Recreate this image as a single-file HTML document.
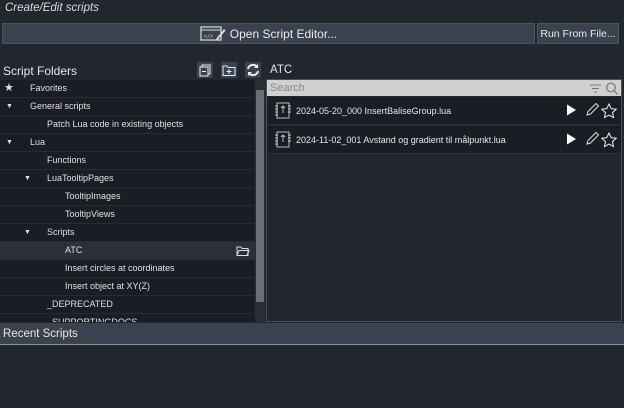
<!DOCTYPE html>
<html><head><style>
*{margin:0;padding:0;box-sizing:border-box}
body{width:624px;height:408px;background:#22262d;font-family:"Liberation Sans",sans-serif;color:#e6e6e6;position:relative;overflow:hidden}
.a{position:absolute}
.btn{background:#3a4250;border:1px solid #4a5361;color:#e8e8e8;font-size:12px;display:flex;align-items:center;justify-content:center;white-space:nowrap}
.tree{left:0;top:80px;width:255px;height:242px;background:#1a1d23;overflow:hidden}
.row{height:18px;border-bottom:1px solid #272b32;font-size:9px;line-height:17px;position:relative;color:#e0e0e0}
.ib{width:16px;height:16px;background:#3a4250;border-radius:1px}
.item{left:268px;width:353px;height:28px;background:#1a1d23;border-bottom:1px solid #2a2e35;font-size:9px;line-height:28px;padding-left:28px}
</style></head><body>
<div class="a" style="left:5px;top:2px;font-size:11.5px;font-style:italic;color:#dcdcdc">Create/Edit scripts</div>
<div class="a btn" style="left:2px;top:23px;width:533px;height:21px">
<svg width="26" height="15" viewBox="0 0 26 15" style="margin-right:4px"><rect x="1" y="1" width="20" height="13" fill="none" stroke="#ddd" stroke-width="1.2"/><line x1="1" y1="4" x2="21" y2="4" stroke="#ddd"/><text x="4" y="12" font-size="5" fill="#ddd" font-family="Liberation Mono">&lt;/&gt;</text><path d="M16 13 L24 3 L25.5 4.5 L17.5 14 Z" fill="#ddd"/></svg>Open Script Editor...</div>
<div class="a btn" style="left:537px;top:23px;width:82px;height:21px;font-size:10.5px">Run From File...</div>
<div class="a" style="left:3px;top:64px;font-size:12px;color:#e6e6e6">Script Folders</div>
<div class="a ib" style="left:197px;top:62px"><svg width="16" height="16"><rect x="5" y="3" width="8" height="9" fill="none" stroke="#eee"/><rect x="3" y="5" width="8" height="9" fill="#3a4250" stroke="#eee"/><line x1="5" y1="9.5" x2="9" y2="9.5" stroke="#eee"/></svg></div>
<div class="a ib" style="left:221px;top:62px"><svg width="16" height="16"><path d="M2 4h4l1 1.5h7v8H2z" fill="none" stroke="#eee"/><path d="M8 7v5M5.5 9.5h5" stroke="#eee"/></svg></div>
<div class="a ib" style="left:245px;top:62px"><svg width="16" height="16"><path d="M3 7a5 5 0 0 1 9-2M13 9a5 5 0 0 1-9 2" fill="none" stroke="#eee" stroke-width="2"/><path d="M13 2v4h-4zM3 14v-4h4z" fill="#eee"/></svg></div>
<div class="a" style="left:270px;top:64px;font-size:11.5px">ATC</div>
<div class="a tree">
<div class="row"><span class="a" style="left:4px;font-size:11px">★</span><span class="a" style="left:30px">Favorites</span></div>
<div class="row"><span class="a" style="left:6px;font-size:7px">▼</span><span class="a" style="left:30px">General scripts</span></div>
<div class="row"><span class="a" style="left:47px">Patch Lua code in existing objects</span></div>
<div class="row"><span class="a" style="left:6px;font-size:7px">▼</span><span class="a" style="left:30px">Lua</span></div>
<div class="row"><span class="a" style="left:47px">Functions</span></div>
<div class="row"><span class="a" style="left:24px;font-size:7px">▼</span><span class="a" style="left:47px">LuaTooltipPages</span></div>
<div class="row"><span class="a" style="left:65px">TooltipImages</span></div>
<div class="row"><span class="a" style="left:65px">TooltipViews</span></div>
<div class="row"><span class="a" style="left:24px;font-size:7px">▼</span><span class="a" style="left:47px">Scripts</span></div>
<div class="row" style="background:#2c3038"><span class="a" style="left:65px">ATC</span><svg class="a" style="left:236px;top:3px" width="14" height="12"><path d="M1 2h4l1 1.5h6v7H1z" fill="none" stroke="#ddd"/><path d="M1 10.5l2-5h10l-2 5" fill="none" stroke="#ddd"/></svg></div>
<div class="row"><span class="a" style="left:65px">Insert circles at coordinates</span></div>
<div class="row"><span class="a" style="left:65px">Insert object at XY(Z)</span></div>
<div class="row"><span class="a" style="left:47px">_DEPRECATED</span></div>
<div class="row"><span class="a" style="left:47px">_SUPPORTINGDOCS</span></div>
</div>
<div class="a" style="left:255px;top:79px;width:10px;height:243px;background:#2a2e35"></div>
<div class="a" style="left:256px;top:90px;width:8px;height:212px;background:#6b6e73"></div>
<div class="a" style="left:266px;top:79px;width:356px;height:243px;border:1px solid #4a4f57;background:#22262d"></div>
<div class="a" style="left:267px;top:80px;width:354px;height:16px;background:#d0d0d0;color:#888;font-size:11px;line-height:16px;padding-left:3px">Search
<svg class="a" style="left:322px;top:2px" width="30" height="13"><path d="M1 3h11M3 6.5h7M5 10h3" stroke="#777"/><circle cx="22" cy="5.5" r="4.3" fill="none" stroke="#777" stroke-width="1.2"/><path d="M25 8.5l3.5 4" stroke="#777" stroke-width="1.3"/></svg></div>
<div class="a item" style="top:97px">2024-05-20_000 InsertBaliseGroup.lua</div>
<div class="a item" style="top:126px">2024-11-02_001 Avstand og gradient til målpunkt.lua</div>
<svg class="a" style="left:274px;top:101px" width="18" height="80"><g fill="none" stroke="#ccc" stroke-width="0.9"><rect x="3" y="2" width="12" height="15"/><path d="M1 5h3M1 8h3M1 11h3M1 14h3M14 5h3M14 8h3M14 11h3"/><path d="M9 5v7M7 7l2-2 2 2"/></g><g transform="translate(0,29)" fill="none" stroke="#ccc" stroke-width="0.9"><rect x="3" y="2" width="12" height="15"/><path d="M1 5h3M1 8h3M1 11h3M1 14h3M14 5h3M14 8h3M14 11h3"/><path d="M9 5v7M7 7l2-2 2 2"/></g></svg>
<svg class="a" style="left:565px;top:103px" width="54" height="45"><g><path d="M2 1.5l9 5.5-9 5.5z" fill="#fff"/><path d="M22 12l1-3.5 8-8 2.5 2.5-8 8z" fill="none" stroke="#ddd"/><path d="M44 1l2.2 4.6 5 .6-3.7 3.4 1 5-4.5-2.5-4.5 2.5 1-5-3.7-3.4 5-.6z" fill="none" stroke="#eee"/></g><g transform="translate(0,29)"><path d="M2 1.5l9 5.5-9 5.5z" fill="#fff"/><path d="M22 12l1-3.5 8-8 2.5 2.5-8 8z" fill="none" stroke="#ddd"/><path d="M44 1l2.2 4.6 5 .6-3.7 3.4 1 5-4.5-2.5-4.5 2.5 1-5-3.7-3.4 5-.6z" fill="none" stroke="#eee"/></g></svg>
<div class="a" style="left:0;top:323px;width:624px;height:22px;background:#3a4250;border-bottom:1px solid #8a9099;font-size:11.5px;line-height:22px;padding-left:3px">Recent Scripts</div>
</body></html>
